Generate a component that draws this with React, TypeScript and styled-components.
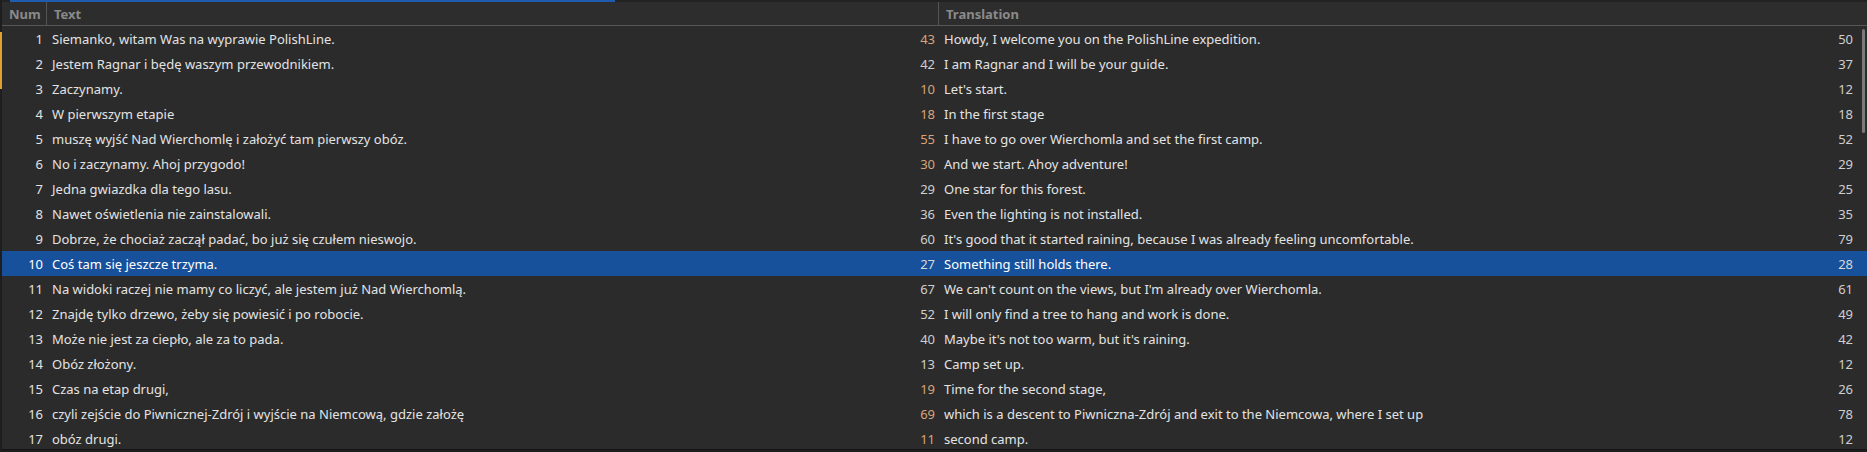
import React from "react";
import styled, { createGlobalStyle } from "styled-components";

type Line = {
  text: string;
  textCount: number;
  warn?: boolean;
  translation: string;
  translationCount: number;
};

const lines: Line[] = [
  { text: "Siemanko, witam Was na wyprawie PolishLine.", textCount: 43, warn: true, translation: "Howdy, I welcome you on the PolishLine expedition.", translationCount: 50 },
  { text: "Jestem Ragnar i będę waszym przewodnikiem.", textCount: 42, translation: "I am Ragnar and I will be your guide.", translationCount: 37 },
  { text: "Zaczynamy.", textCount: 10, warn: true, translation: "Let's start.", translationCount: 12 },
  { text: "W pierwszym etapie", textCount: 18, warn: true, translation: "In the first stage", translationCount: 18 },
  { text: "muszę wyjść Nad Wierchomlę i założyć tam pierwszy obóz.", textCount: 55, warn: true, translation: "I have to go over Wierchomla and set the first camp.", translationCount: 52 },
  { text: "No i zaczynamy. Ahoj przygodo!", textCount: 30, warn: true, translation: "And we start. Ahoy adventure!", translationCount: 29 },
  { text: "Jedna gwiazdka dla tego lasu.", textCount: 29, translation: "One star for this forest.", translationCount: 25 },
  { text: "Nawet oświetlenia nie zainstalowali.", textCount: 36, translation: "Even the lighting is not installed.", translationCount: 35 },
  { text: "Dobrze, że chociaż zaczął padać, bo już się czułem nieswojo.", textCount: 60, translation: "It's good that it started raining, because I was already feeling uncomfortable.", translationCount: 79 },
  { text: "Coś tam się jeszcze trzyma.", textCount: 27, translation: "Something still holds there.", translationCount: 28 },
  { text: "Na widoki raczej nie mamy co liczyć, ale jestem już Nad Wierchomlą.", textCount: 67, translation: "We can't count on the views, but I'm already over Wierchomla.", translationCount: 61 },
  { text: "Znajdę tylko drzewo, żeby się powiesić i po robocie.", textCount: 52, translation: "I will only find a tree to hang and work is done.", translationCount: 49 },
  { text: "Może nie jest za ciepło, ale za to pada.", textCount: 40, translation: "Maybe it's not too warm, but it's raining.", translationCount: 42 },
  { text: "Obóz złożony.", textCount: 13, translation: "Camp set up.", translationCount: 12 },
  { text: "Czas na etap drugi,", textCount: 19, warn: true, translation: "Time for the second stage,", translationCount: 26 },
  { text: "czyli zejście do Piwnicznej-Zdrój i wyjście na Niemcową, gdzie założę", textCount: 69, warn: true, translation: "which is a descent to Piwniczna-Zdrój and exit to the Niemcowa, where I set up", translationCount: 78 },
  { text: "obóz drugi.", textCount: 11, warn: true, translation: "second camp.", translationCount: 12 },
];

const SELECTED = 9;

const GlobalStyle = createGlobalStyle`
  html, body {
    margin: 0;
    padding: 0;
    background: #1e1e1e;
    overflow: hidden;
  }
  body {
    font-family: "Noto Sans", "Open Sans", sans-serif;
    font-size: 13px;
  }
`;

const COLUMNS = "45px 892px 918px";

const Window = styled.div`
  display: flex;
  height: 452px;
  width: 1867px;
  background: #1e1e1e;
`;

const Gutter = styled.div`
  width: 2px;
  flex: none;
  padding-top: 32px;
  background: #1e1e1e;
`;

const GutterMark = styled.div`
  height: 57px;
  background: #e2a032;
`;

const Panel = styled.div`
  flex: 1;
  display: flex;
  flex-direction: column;
  height: 449px;
  border-bottom: 1px solid #141414;
  background: #2b2b2b;
  overflow: hidden;
`;

const Progress = styled.div`
  height: 2px;
  flex: none;
  background: #222222;
  display: flex;
`;

const ProgressFill = styled.div`
  margin-left: 8px;
  width: 605px;
  background: #1f5cb0;
`;

const Header = styled.div`
  display: grid;
  grid-template-columns: ${COLUMNS};
  height: 23px;
  flex: none;
  background: #2d2d2d;
  border-bottom: 1px solid #575757;
`;

const HeaderCell = styled.div<{ $last?: boolean }>`
  display: flex;
  align-items: center;
  padding-left: 7px;
  color: #8a8a8a;
  font-weight: 700;
  font-size: 13px;
  border-right: ${({ $last }) => ($last ? "none" : "1px solid #555555")};
`;

const Body = styled.div`
  position: relative;
  flex: 1;
  overflow: hidden;
`;

const Row = styled.div<{ $selected?: boolean }>`
  display: grid;
  grid-template-columns: ${COLUMNS};
  height: 25px;
  align-items: center;
  background: ${({ $selected }) => ($selected ? "#17519c" : "transparent")};
  color: ${({ $selected }) => ($selected ? "#ffffff" : "#e3e3e3")};
`;

const NumCell = styled.div`
  text-align: right;
  padding-right: 4px;
  color: inherit;
`;

const TextCell = styled.div`
  display: flex;
  justify-content: space-between;
  align-items: center;
  padding: 0 4px 0 5px;
  white-space: nowrap;
  overflow: hidden;
`;

const Count = styled.span<{ $warn?: boolean; $selected?: boolean }>`
  color: ${({ $warn, $selected }) =>
    $selected ? "#d8d8d8" : $warn ? "#d9a47a" : "#cfcfcf"};
`;

const ScrollThumb = styled.div`
  position: absolute;
  right: 2px;
  top: 3px;
  width: 3px;
  height: 104px;
  border-radius: 2px;
  background: #7a7a7a;
`;

export default function App() {
  return (
    <>
      <GlobalStyle />
      <Window>
        <Gutter>
          <GutterMark />
        </Gutter>
        <Panel>
          <Progress>
            <ProgressFill />
          </Progress>
          <Header>
            <HeaderCell>Num</HeaderCell>
            <HeaderCell>Text</HeaderCell>
            <HeaderCell $last>Translation</HeaderCell>
          </Header>
          <Body>
            {lines.map((line, i) => {
              const selected = i === SELECTED;
              return (
                <Row key={i} $selected={selected}>
                  <NumCell>{i + 1}</NumCell>
                  <TextCell>
                    <span>{line.text}</span>
                    <Count $warn={line.warn} $selected={selected}>
                      {line.textCount}
                    </Count>
                  </TextCell>
                  <TextCell>
                    <span>{line.translation}</span>
                    <Count $selected={selected}>{line.translationCount}</Count>
                  </TextCell>
                </Row>
              );
            })}
            <ScrollThumb />
          </Body>
        </Panel>
      </Window>
    </>
  );
}
